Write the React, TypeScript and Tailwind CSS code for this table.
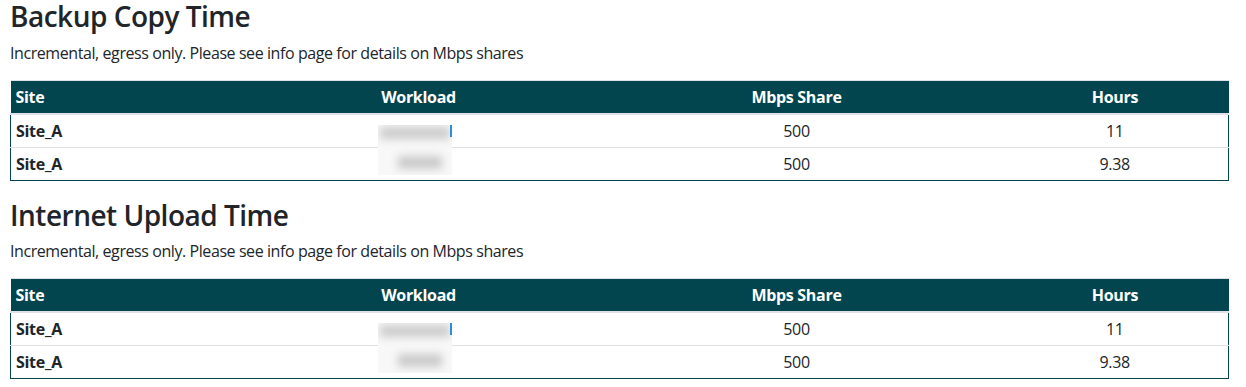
import React from 'react';

const rows = [
  { site: 'Site_A', share: '500', hours: '11' },
  { site: 'Site_A', share: '500', hours: '9.38' }
];

const Redacted = () => (
  <div className="absolute left-[132px] top-[10px] w-[74px] h-[50px] bg-[#f8f8f8] overflow-hidden">
    <div className="absolute left-[2px] top-[2px] w-[70px] h-[12px] bg-[#cbcbcb] blur-[4px]"></div>
    <div className="absolute left-[72px] top-0 w-[2px] h-[12px] bg-[#2a8fd8]"></div>
    <div className="absolute left-[20px] top-[31px] w-[44px] h-[13px] bg-[#cacaca] blur-[4px]"></div>
  </div>
);

const TimeTable = ({ title }: { title: string }) => (
  <section className="mb-[18px]">
    <h3 className="text-[28px] leading-[1.2] font-semibold tracking-[-0.5px] mb-[7px] text-[#212529]">{title}</h3>
    <p className="text-base leading-6 mb-[15px] tracking-[-0.42px] text-[#212529]">
      Incremental, egress only. Please see info page for details on Mbps shares
    </p>
    <table className="w-full table-fixed border-collapse text-base leading-6 tracking-[-0.3px] text-[#212529]">
      <thead>
        <tr className="bg-[#02454f] text-white font-bold border-t border-t-[#dee2e6] border-b-2 border-b-[#dee2e6]">
          <th className="w-[235px] text-left px-[5px] py-[4px]">Site</th>
          <th className="w-[346px] text-center px-[5px] py-[4px]">Workload</th>
          <th className="w-[410px] text-center px-[5px] py-[4px]">Mbps Share</th>
          <th className="text-center px-[5px] py-[4px]">Hours</th>
        </tr>
      </thead>
      <tbody className="border-x border-b border-[#02454f]">
        {rows.map((r, i) => (
          <tr key={i} className={i === 0 ? 'border-b border-[#dee2e6]' : ''}>
            <th className="text-left font-bold px-[5px] py-[4px]">{r.site}</th>
            <td className="relative text-center px-[5px] py-[4px]">{i === 0 && <Redacted />}</td>
            <td className="text-center px-[5px] py-[4px]">{r.share}</td>
            <td className="text-center px-[5px] py-[4px]">{r.hours}</td>
          </tr>
        ))}
      </tbody>
    </table>
  </section>
);

export default function App() {
  return (
    <div className="px-[10px] pr-[17px] bg-white font-['Open_Sans','Noto_Sans',sans-serif]">
      <TimeTable title="Backup Copy Time" />
      <TimeTable title="Internet Upload Time" />
    </div>
  );
}
